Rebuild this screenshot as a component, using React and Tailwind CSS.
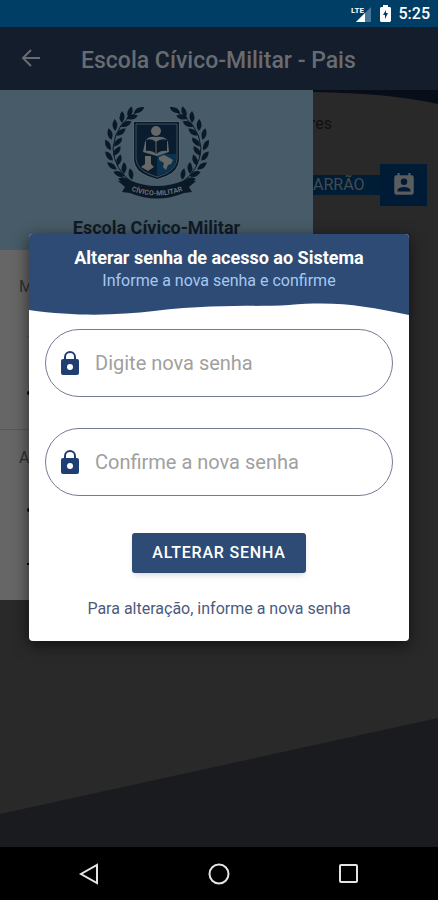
import React from "react";

function StatusBar() {
  return (
    <div className="flex h-[27px] shrink-0 items-center justify-end bg-[#003e65] pr-2 text-white">
      <svg viewBox="0 0 21 18" className="mr-2 h-[18px] w-[21px]" aria-label="LTE">
        <path d="M20 2V17H5Z" fill="#49779a" />
        <path d="M14 8V17H5Z" fill="#fff" />
        <text x="0" y="8" fill="#fff" fontSize="8" fontWeight="700" fontFamily="Roboto, sans-serif">
          LTE
        </text>
      </svg>
      <svg viewBox="0 0 11 17" className="mr-2 h-[17px] w-[11px]" aria-hidden="true">
        <path d="M3 0H8V2H10L11 3V16L10 17H1L0 16V3L1 2H3Z" fill="#fff" />
        <path d="M6 5L3 10H5V14L8 8H6Z" fill="#003e65" />
      </svg>
      <span className="text-base font-medium leading-[27px]">5:25</span>
    </div>
  );
}

function AppBar() {
  return (
    <header className="flex h-[63px] items-center bg-[#131d2c] pl-5 text-[#686c71]">
      <button type="button" aria-label="Voltar" className="mr-[39px]">
        <svg viewBox="0 0 22 22" className="h-[22px] w-[22px]" fill="none" stroke="currentColor" strokeWidth="2">
          <path d="M20 10H3M11 2L3 10L11 18" />
        </svg>
      </button>
      <h1 className="pt-1 text-[23px] font-medium leading-7">Escola Cívico-Militar - Pais</h1>
    </header>
  );
}

const leaves = [
  [34, 4, 60],
  [25, 6, 15],
  [27, 11, 75],
  [17, 11, 0],
  [21, 18, 62],
  [10, 19, -5],
  [16, 26, 50],
  [5, 28, -15],
  [13, 36, 42],
  [3, 39, -28],
  [12, 45, 35],
  [4, 50, -40],
  [14, 54, 15],
  [7, 60, -55],
  [19, 62, 0],
  [14, 68, -70],
  [26, 68, -12],
  [19, 74, -80],
];

function Laurel() {
  return (
    <g>
      <path d="M36 4Q10 16 8 42Q9 64 28 77" fill="none" stroke="#0b1826" strokeWidth="1" />
      {leaves.map(([x, y, angle]) => (
        <path
          key={x + "-" + y}
          d="M0 -6Q5 -1 0 6Q-5 1 0 -6Z"
          fill="#0b1826"
          transform={`translate(${x} ${y}) rotate(${angle})`}
        />
      ))}
    </g>
  );
}

function Emblem() {
  return (
    <svg viewBox="0 0 104 94" className="h-[94px] w-[104px]" role="img" aria-label="Emblema da escola">
      <Laurel />
      <g transform="translate(104 0) scale(-1 1)">
        <Laurel />
      </g>
      <path d="M28 15H75V54Q74 66 61 71L52 74L43 71Q29 66 28 54Z" fill="#536571" />
      <path d="M29 16H74V54Q73 65 61 70L52 73L43 70Q30 65 29 54Z" fill="#0b1826" />
      <path d="M31 18H72V53Q71 63 60 68L52 71L44 68Q32 63 31 53Z" fill="#0a1c30" stroke="#3d4f5e" strokeWidth="1" />
      <path d="M52 48H71V53Q70 63 60 67L52 70Z" fill="#0b3350" />
      <circle cx="51" cy="25" r="5" fill="#65686a" />
      <path d="M40 36Q42 30 51 31Q61 30 63 36L64 46L52 50L38 46Z" fill="#65686a" />
      <path d="M41 34Q47 32 51 36Q56 32 62 34V45Q56 44 51 48Q47 44 41 45Z" fill="#0a1b2c" />
      <path d="M51 36V48" stroke="#65686a" strokeWidth="1" />
      <path d="M40 50H46V58L49 61L43 65L36 61L40 58Z" fill="#686866" />
      <path d="M54 51L59 49L63 51L68 54L66 58L63 59L61 64L58 61L59 57L54 54Z" fill="#686866" />
      <path d="M13 75L24 74Q52 86 80 74L91 75L84 81L87 86L79 87Q52 98 25 87L17 86L20 81Z" fill="#0b1826" />
      <path id="ribbon-line" d="M22 83Q52 96 82 83" fill="none" />
      <text fill="#6b7073" fontSize="7" fontWeight="700" fontFamily="Roboto, sans-serif" textAnchor="middle">
        <textPath href="#ribbon-line" startOffset="50%">CÍVICO-MILITAR</textPath>
      </text>
    </svg>
  );
}

function Drawer() {
  return (
    <aside className="absolute left-0 top-[63px] w-[313px] bg-[#666] text-[#303030]">
      <div className="flex h-[160px] flex-col items-center bg-[#475b68] pt-4">
        <Emblem />
        <p className="mt-4 text-lg font-bold leading-6 text-[#101a26]">Escola Cívico-Militar</p>
      </div>
      <nav className="h-[350px]">
        <div className="h-[180px] border-b border-[#585858] px-[19px] pt-[27px]">
          <p className="text-base leading-5">M</p>
          <ul className="flex flex-col gap-[54px] pl-2 pt-[39px] text-black">
            <li className="h-px w-3 bg-[#585858]" />
            <li className="h-1 w-3 rounded-full bg-black" />
          </ul>
        </div>
        <div className="px-[19px] pt-[18px]">
          <p className="text-base leading-5">A</p>
          <ul className="flex flex-col gap-[51px] pl-2 pt-10">
            <li className="h-1 w-3 rounded-full bg-black" />
            <li className="h-0.5 w-3 bg-black" />
          </ul>
        </div>
      </nav>
    </aside>
  );
}

function Backdrop() {
  return (
    <>
      <svg viewBox="0 0 438 16" preserveAspectRatio="none" className="h-4 w-full shrink-0" aria-hidden="true">
        <path d="M300 0H438V14Q390 3 313 2Z" fill="#080e19" />
      </svg>
      <div className="flex flex-col items-end pr-[11px] text-[#101010]">
        <p className="mr-[95px] mt-2 text-base leading-5">res</p>
        <div className="mt-[30px] flex w-[114px] items-center">
          <div className="flex h-5 flex-1 items-center bg-[#001d36] text-base text-[#454b50]">ARRÃO</div>
          <div className="flex h-[42px] w-[47px] items-center justify-center bg-[#001b35]">
            <svg viewBox="0 0 24 24" className="h-[26px] w-[26px]" fill="#5a5c5e" aria-hidden="true">
              <path d="M19 3h-1V1h-2v2H8V1H6v2H5a2 2 0 0 0-2 2v14a2 2 0 0 0 2 2h14a2 2 0 0 0 2-2V5a2 2 0 0 0-2-2zm-7 3a3 3 0 1 1 0 6 3 3 0 0 1 0-6zm6 12H6v-1c0-2 4-3.100 6-3.100s6 1.100 6 3.100v1z" />
            </svg>
          </div>
        </div>
      </div>
      <svg viewBox="0 0 438 129" preserveAspectRatio="none" className="mt-auto h-[129px] w-full" aria-hidden="true">
        <path d="M0 96L438 0V129H0Z" fill="#1a1b1f" />
      </svg>
    </>
  );
}

function PasswordField({ id, label }) {
  return (
    <div className="flex h-[68px] items-center rounded-full border border-[#747b94] pl-[15px] pr-6">
      <label htmlFor={id} aria-label={label}>
        <svg viewBox="0 0 18 24" className="h-6 w-[18px]" aria-hidden="true">
          <path d="M4 9V6a5 5 0 0 1 10 0v3" fill="none" stroke="#1f3c70" strokeWidth="2" />
          <rect y="8" width="18" height="16" rx="2" fill="#1f3f73" />
          <circle cx="9" cy="16" r="3" fill="#fff" />
        </svg>
      </label>
      <input
        id={id}
        type="password"
        placeholder={label}
        className="ml-4 min-w-0 flex-1 bg-transparent text-xl leading-6 text-[#333] outline-none placeholder:text-[#a0a0a0]"
      />
    </div>
  );
}

function PasswordDialog() {
  return (
    <div className="absolute inset-0 flex items-center justify-center px-[29px]">
      <section role="dialog" aria-labelledby="dialog-title" className="w-full overflow-hidden rounded-sm bg-white shadow-[0_4px_16px_rgba(0,0,0,0.6)]">
        <div className="bg-[#2d4b74] pt-3 text-center">
          <h2 id="dialog-title" className="text-lg font-bold leading-6 text-white">Alterar senha de acesso ao Sistema</h2>
          <p className="text-base leading-[22px] text-[#a5c8f2]">Informe a nova senha e confirme</p>
          <svg viewBox="0 0 380 24" preserveAspectRatio="none" className="block h-6 w-full" aria-hidden="true">
            <path d="M0 18C50 25 90 23 125 19C185 12 230 15 260 13C310 9 335 14 380 23V24H0Z" fill="#fff" />
          </svg>
        </div>
        <form className="flex flex-col px-4 pb-[22px] pt-[13px]" onSubmit={(e) => e.preventDefault()}>
          <div className="flex flex-col gap-[31px]">
            <PasswordField id="new-password" label="Digite nova senha" />
            <PasswordField id="confirm-password" label="Confirme a nova senha" />
          </div>
          <button type="submit" className="mt-[37px] h-10 w-[174px] self-center rounded-[3px] bg-[#2d4b74] text-base font-medium tracking-wider text-white shadow-md">
            ALTERAR SENHA
          </button>
          <p className="mt-[26px] text-center text-base leading-5 text-[#4c5b7c]">Para alteração, informe a nova senha</p>
        </form>
      </section>
    </div>
  );
}

function NavigationBar() {
  return (
    <nav className="flex h-[53px] shrink-0 items-center justify-center gap-[106px] bg-black text-[#e4e4e4]">
      <button type="button" aria-label="Voltar">
        <svg viewBox="0 0 24 24" className="h-6 w-6" fill="none" stroke="currentColor" strokeWidth="2">
          <path d="M20 3V21L4 12Z" />
        </svg>
      </button>
      <button type="button" aria-label="Início">
        <svg viewBox="0 0 24 24" className="h-6 w-6" fill="none" stroke="currentColor" strokeWidth="2">
          <circle cx="12" cy="12" r="9.500" />
        </svg>
      </button>
      <button type="button" aria-label="Recentes">
        <svg viewBox="0 0 24 24" className="h-6 w-6" fill="none" stroke="currentColor" strokeWidth="2">
          <rect x="3" y="3" width="17" height="17" rx="1" />
        </svg>
      </button>
    </nav>
  );
}

export default function App() {
  return (
    <div className="flex min-h-screen flex-col bg-[#292929] font-['Roboto',sans-serif]">
      <StatusBar />
      <main className="relative flex flex-1 flex-col">
        <AppBar />
        <Backdrop />
        <Drawer />
        <PasswordDialog />
      </main>
      <NavigationBar />
    </div>
  );
}
